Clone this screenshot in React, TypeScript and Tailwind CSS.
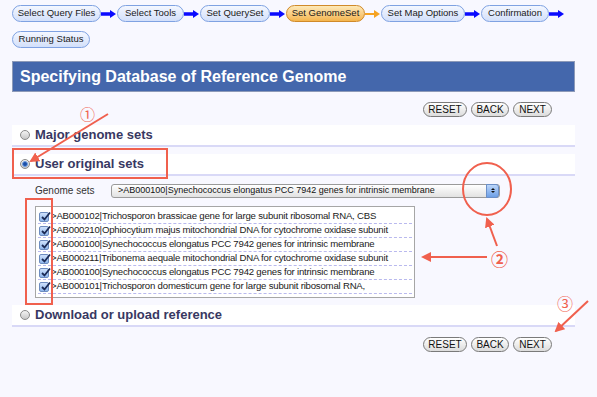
import React from "react"

const steps = [
  { label: "Select Query Files", w: "w-[89px]" },
  { label: "Select Tools", w: "w-[67px]" },
  { label: "Set QuerySet", w: "w-[70px]" },
  { label: "Set GenomeSet", w: "w-[79px]", active: true },
  { label: "Set Map Options", w: "w-[84px]" },
  { label: "Confirmation", w: "w-[68px]" },
]

const genomes = [
  ">AB000102|Trichosporon brassicae gene for large subunit ribosomal RNA, CBS",
  ">AB000210|Ophiocytium majus mitochondrial DNA for cytochrome oxidase subunit",
  ">AB000100|Synechococcus elongatus PCC 7942 genes for intrinsic membrane",
  ">AB000211|Tribonema aequale mitochondrial DNA for cytochrome oxidase subunit",
  ">AB000100|Synechococcus elongatus PCC 7942 genes for intrinsic membrane",
  ">AB000101|Trichosporon domesticum gene for large subunit ribosomal RNA,",
]

function StepArrow({ orange }: { orange?: boolean }) {
  const c = orange ? "#f5a323" : "#0a0aff"
  return (
    <svg width="16" height="10" viewBox="0 0 16 10" className="shrink-0">
      <line x1="0" y1="5" x2="10" y2="5" stroke={c} strokeWidth={orange ? 2 : 3.5} />
      <polygon points="9,1 15,5 9,9" fill={c} />
    </svg>
  )
}

function Pill({ label, w, active }: { label: string; w: string; active?: boolean }) {
  return (
    <div
      className={`${w} h-[17px] shrink-0 rounded-full border flex items-center justify-center text-[9.5px] text-[#1a1a1a] ${
        active
          ? "border-[#d08a2a] bg-gradient-to-b from-[#fde9b8] to-[#f4b54c]"
          : "border-[#7fa2e2] bg-gradient-to-b from-[#f4f7ff] to-[#d3e0fa]"
      }`}
    >
      {label}
    </div>
  )
}

function NavButtons() {
  return (
    <div className="flex justify-end gap-[4px] pr-[23px]">
      {["RESET", "BACK", "NEXT"].map((b, i) => (
        <button
          key={b}
          className={`${i === 0 ? "w-[44px]" : i === 1 ? "w-[38px]" : "w-[39px]"} h-[15px] rounded-full border border-[#7a7a7a] bg-gradient-to-b from-white to-[#dcdcdc] text-[10px] leading-none text-[#111] flex items-center justify-center`}
        >
          {b}
        </button>
      ))}
    </div>
  )
}

function Radio({ checked }: { checked?: boolean }) {
  return (
    <span className="w-[10px] h-[10px] rounded-full border border-[#8a8a8a] bg-gradient-to-b from-[#f4f4f4] to-[#c8c8c8] flex items-center justify-center shrink-0">
      {checked && <span className="w-[6px] h-[6px] rounded-full bg-[#1c4fa8] border border-[#6f9de0]" />}
    </span>
  )
}

function Band({ label, checked }: { label: string; checked?: boolean }) {
  return (
    <div className="h-[22px] bg-white border-b-2 border-[#d9d9f7] flex items-center gap-[5px] pl-[8px]">
      <Radio checked={checked} />
      <span className="text-[13px] font-bold text-[#383862]">{label}</span>
    </div>
  )
}

function Check() {
  return (
    <span className="w-[10px] h-[10px] rounded-[2px] border border-[#6d8cc0] bg-gradient-to-b from-[#cfe1fb] to-[#8fb6ec] relative shrink-0">
      <svg width="11" height="11" viewBox="0 0 11 11" className="absolute -top-[2px] left-[0px]">
        <path d="M2 6 L4.5 8.5 L10 1.5" fill="none" stroke="#1b2a55" strokeWidth="1.8" />
      </svg>
    </span>
  )
}

export default function App() {
  const red = "#f0604e"
  return (
    <div className="relative w-[597px] h-[397px] overflow-hidden bg-[#f8f8ff] font-['Liberation_Sans',Arial,sans-serif]">
      {/* wizard steps */}
      <div className="px-[12px] pt-[5px]">
        <div className="flex items-center">
          {steps.map((s) => (
            <React.Fragment key={s.label}>
              <Pill {...s} />
              <StepArrow orange={s.active} />
            </React.Fragment>
          ))}
        </div>
        <div className="mt-[9px]">
          <Pill label="Running Status" w="w-[78px]" />
        </div>
      </div>

      <div className="mx-[12px] w-[563px]">
        <div className="mt-[13px] h-[31px] bg-[#4467ac] border border-[#8d9ab8] flex items-center pl-[7px]">
          <h1 className="text-[16px] font-bold text-white">Specifying Database of Reference Genome</h1>
        </div>

        <div className="mt-[10px]">
          <NavButtons />
        </div>

        <div className="mt-[8px]">
          <Band label="Major genome sets" />
        </div>
        <div className="mt-[7px]">
          <Band label="User original sets" checked />
        </div>

        <div className="mt-[7px] flex items-center">
          <span className="w-[99px] pl-[23px] text-[10px] text-[#333]">Genome sets</span>
          <div className="w-[389px] h-[14px] rounded-[3px] border border-[#9a9a9a] bg-gradient-to-b from-white to-[#e2e2e2] flex items-center pl-[6px] relative">
            <span className="text-[9px] text-[#111]">
              &gt;AB000100|Synechococcus elongatus PCC 7942 genes for intrinsic membrane
            </span>
            <span className="absolute right-0 top-[-1px] w-[13px] h-[14px] rounded-r-[3px] border border-[#6b8fc8] bg-gradient-to-b from-[#bcd6fa] to-[#6d9fe6] flex flex-col items-center justify-center gap-[1px]">
              <span className="w-0 h-0 border-l-[2px] border-r-[2px] border-b-[2px] border-l-transparent border-r-transparent border-b-[#111]" />
              <span className="w-0 h-0 border-l-[2px] border-r-[2px] border-t-[2px] border-l-transparent border-r-transparent border-t-[#111]" />
            </span>
          </div>
        </div>

        <div className="mt-[8px] ml-[23px] w-[380px] h-[92px] border border-[#a6a6a6] bg-white px-[2px] pt-[3px]">
          {genomes.map((g, i) => (
            <div key={i} className="h-[14px] flex items-center gap-[2px] pl-[1px] border-b border-dashed border-[#b9b9ee]">
              <Check />
              <span className="text-[9.6px] text-[#1a1a1a] whitespace-nowrap tracking-[-0.2px]">{g}</span>
            </div>
          ))}
        </div>

        <div className="mt-[7px]">
          <Band label="Download or upload reference" />
        </div>

        <div className="mt-[10px]">
          <NavButtons />
        </div>
      </div>

      {/* annotation overlay */}
      <svg className="absolute inset-0 pointer-events-none" width="597" height="397" viewBox="0 0 597 397">
        <defs>
          <marker id="ah" viewBox="0 0 10 10" refX="8" refY="5" markerWidth="5" markerHeight="5" orient="auto-start-reverse">
            <path d="M0 0 L10 5 L0 10 z" fill={red} />
          </marker>
        </defs>
        <rect x="13" y="149" width="154" height="29" fill="none" stroke={red} strokeWidth="2" />
        <rect x="26" y="199" width="26" height="105" fill="none" stroke={red} strokeWidth="2" />
        <ellipse cx="487" cy="189" rx="24" ry="26" fill="none" stroke={red} strokeWidth="2" />
        <line x1="108" y1="114" x2="31" y2="161" stroke={red} strokeWidth="2" markerEnd="url(#ah)" />
        <line x1="497" y1="246" x2="487" y2="219" stroke={red} strokeWidth="2" markerEnd="url(#ah)" />
        <line x1="487" y1="257" x2="423" y2="257" stroke={red} strokeWidth="2" markerEnd="url(#ah)" />
        <line x1="588" y1="301" x2="556" y2="331" stroke={red} strokeWidth="2" markerEnd="url(#ah)" />
        <text x="80" y="120" fill={red} fontSize="15" fontFamily="'Noto Sans CJK JP', sans-serif">①</text>
        <text x="491" y="266" fill={red} fontSize="17" fontWeight="bold" fontFamily="'Noto Sans CJK JP', sans-serif">②</text>
        <text x="557" y="310" fill={red} fontSize="16" fontFamily="'Noto Sans CJK JP', sans-serif">③</text>
      </svg>
    </div>
  )
}
